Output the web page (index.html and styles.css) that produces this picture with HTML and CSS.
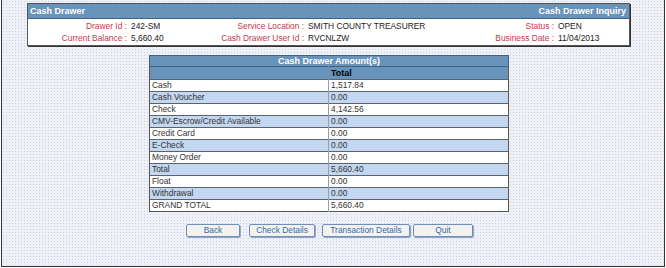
FILE: index.html
```html
<!DOCTYPE html>
<html>
<head>
<meta charset="utf-8">
<link rel="stylesheet" href="styles.css">
</head>
<body>
<div class="frame">
  <div class="panel">
    <div class="bar"><span>Cash Drawer</span><span>Cash Drawer Inquiry</span></div>
    <div class="info">
      <span class="lbl">Drawer Id :</span><span class="val">242-SM</span>
      <span class="lbl">Service Location :</span><span class="val">SMITH COUNTY TREASURER</span>
      <span class="lbl">Status :</span><span class="val">OPEN</span>
      <span class="lbl">Current Balance :</span><span class="val">5,660.40</span>
      <span class="lbl">Cash Drawer User Id :</span><span class="val">RVCNLZW</span>
      <span class="lbl">Business Date :</span><span class="val">11/04/2013</span>
    </div>
  </div>
  <div class="amounts">
    <div class="title">Cash Drawer Amount(s)</div>
    <table class="grid">
      <tr class="head"><td></td><td>Total</td></tr>
      <tr><td>Cash</td><td>1,517.84</td></tr>
      <tr class="alt"><td>Cash Voucher</td><td>0.00</td></tr>
      <tr><td>Check</td><td>4,142.56</td></tr>
      <tr class="alt"><td>CMV-Escrow/Credit Available</td><td>0.00</td></tr>
      <tr><td>Credit Card</td><td>0.00</td></tr>
      <tr class="alt"><td>E-Check</td><td>0.00</td></tr>
      <tr><td>Money Order</td><td>0.00</td></tr>
      <tr class="alt"><td>Total</td><td>5,660.40</td></tr>
      <tr><td>Float</td><td>0.00</td></tr>
      <tr class="alt"><td>Withdrawal</td><td>0.00</td></tr>
      <tr><td>GRAND TOTAL</td><td>5,660.40</td></tr>
    </table>
  </div>
  <div class="buttons">
    <button class="btn b-back">Back</button>
    <button class="btn b-check">Check Details</button>
    <button class="btn b-trans">Transaction Details</button>
    <button class="btn b-quit">Quit</button>
  </div>
</div>
</body>
</html>
```
FILE: styles.css
```css
html, body {
  margin: 0;
  padding: 0;
  background: #ffffff;
}
body {
  font-family: "Liberation Sans", Arial, sans-serif;
  font-size: 8.4px;
  color: #2a2a2a;
}
.frame {
  box-sizing: border-box;
  margin-left: 1px;
  width: 664px;
  height: 267px;
  border-left: 1px solid #333;
  border-right: 1px solid #333;
  border-bottom: 1px solid #333;
  background-color: #eff1f7;
  background-image: radial-gradient(circle, #c6d0ea 0.6px, transparent 0.9px);
  background-size: 3px 3px;
  padding-top: 3px;
}
.panel {
  margin-left: 25px;
  width: 601px;
  border: 1px solid #555;
  box-shadow: 1px 1px 0 #333;
  background: #ffffff;
}
.bar {
  height: 14px;
  background: #6893ba;
  color: #fff;
  font-weight: bold;
  font-size: 9px;
  display: flex;
  justify-content: space-between;
  align-items: center;
  padding: 0 3px 0 2px;
  border-bottom: 1px solid #45617c;
}
.info {
  display: grid;
  grid-template-columns: 99px 66px 111px 152px 98px auto;
  grid-auto-rows: 12px;
  align-items: center;
  padding: 1px 0 1px;
}
.lbl {
  text-align: right;
  color: #c33a4c;
  white-space: nowrap;
}
.val {
  padding-left: 4px;
  white-space: nowrap;
  color: #222;
}
.amounts {
  margin-left: 147px;
  margin-top: 9px;
  width: 360px;
}
.title {
  height: 10px;
  line-height: 10px;
  background: #6893ba;
  color: #fff;
  font-weight: bold;
  font-size: 9px;
  text-align: center;
  border: 1px solid #45617c;
  border-bottom: none;
}
.grid {
  width: 360px;
  border-collapse: collapse;
  border: 1px solid #555;
  background: #fff;
}
.grid td {
  height: 11px;
  padding: 0 0 0 2px;
  border-top: 1px solid #5a6470;
  line-height: 11px;
  white-space: nowrap;
  color: #333;
}
.grid td:first-child {
  width: 176px;
  border-right: 1px solid #8fa2b6;
}
.grid tr.head td {
  background: #6893ba;
  color: #000;
  font-weight: bold;
  font-size: 9px;
  height: 12px;
  border-top: 1px solid #45617c;
}
.grid tr.head td:first-child {
  border-right: 1px solid #6893ba;
}
.grid tr.alt td {
  background: #c3d7f0;
}
.buttons {
  display: flex;
  margin-left: 184px;
  margin-top: 12px;
}
.btn {
  box-sizing: border-box;
  height: 13px;
  padding: 0;
  font-family: "Liberation Sans", Arial, sans-serif;
  font-size: 8.4px;
  color: #3a6aa8;
  background: #f3f2ee;
  border: 1px solid #6e8fbc;
  border-radius: 2px;
  box-shadow: 1px 1px 0 #9aa8bc;
  line-height: 11px;
}
.b-back { width: 54px; margin-right: 9px; }
.b-check { width: 66px; margin-right: 7px; }
.b-trans { width: 88px; margin-right: 3px; }
.b-quit { width: 60px; }
```
